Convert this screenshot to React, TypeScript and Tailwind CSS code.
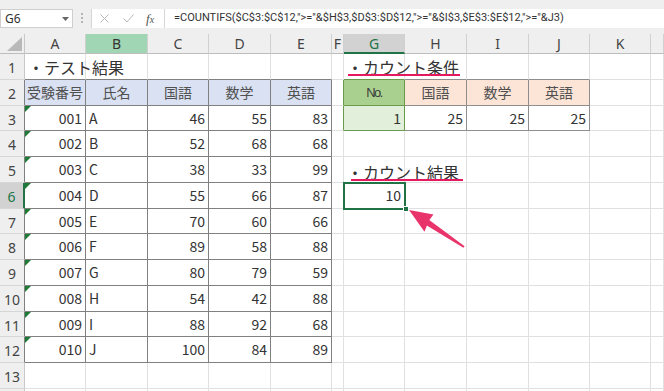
import React from 'react';

type Kind = 'light' | 'dark' | 'gray' | 'green';

const COLW = ['w-[61px]', 'w-[62px]', 'w-[61px]', 'w-[62px]', 'w-[61px]', 'w-[12px]', 'w-[61px]', 'w-[62px]', 'w-[62px]', 'w-[61px]', 'w-[61px]', 'w-[13px]'];
const COLN = ['A', 'B', 'C', 'D', 'E', 'F', 'G', 'H', 'I', 'J', 'K', ''];
const ROWH = ['h-[26px]', 'h-[26px]', 'h-[25px]', 'h-[26px]', 'h-[26px]', 'h-[26px]', 'h-[25px]', 'h-[26px]', 'h-[26px]', 'h-[26px]', 'h-[25px]', 'h-[26px]', 'h-[26px]', 'h-[26px]'];

const DATA = [
  ['001', 'A', '46', '55', '83'],
  ['002', 'B', '52', '68', '68'],
  ['003', 'C', '38', '33', '99'],
  ['004', 'D', '55', '66', '87'],
  ['005', 'E', '70', '60', '66'],
  ['006', 'F', '89', '58', '88'],
  ['007', 'G', '80', '79', '59'],
  ['008', 'H', '54', '42', '88'],
  ['009', 'I', '88', '92', '68'],
  ['010', 'J', '100', '84', '89'],
];

const BR: Record<Kind, string> = {
  light: 'border-r-[#e0e0e0]',
  dark: 'border-r-[#808080]',
  gray: 'border-r-[#8e8e8e]',
  green: 'border-r-[#6a9b4c]',
};
const BB: Record<Kind, string> = {
  light: 'border-b-[#e0e0e0]',
  dark: 'border-b-[#808080]',
  gray: 'border-b-[#8e8e8e]',
  green: 'border-b-[#6a9b4c]',
};

const inT1 = (r: number, c: number) => r >= 2 && r <= 12 && c >= 0 && c <= 4;
const inT2 = (r: number, c: number) => r >= 2 && r <= 3 && c >= 6 && c <= 9;

function rightKind(r: number, c: number): Kind {
  if (inT1(r, c) || inT1(r, c + 1)) return 'dark';
  if ((c === 5 || c === 6) && inT2(r, 6)) return 'green';
  if (inT2(r, c) || inT2(r, c + 1)) return 'gray';
  return 'light';
}
function bottomKind(r: number, c: number): Kind {
  if (inT1(r, c) || inT1(r + 1, c)) return 'dark';
  if (c === 6 && (inT2(r, c) || inT2(r + 1, c))) return 'green';
  if (inT2(r, c) || inT2(r + 1, c)) return 'gray';
  return 'light';
}

const HEAD1 = ['受験番号', '氏名', '国語', '数学', '英語'];
const HEAD2 = ['国語', '数学', '英語'];

function CellContent({ r, c }: { r: number; c: number }) {
  if (r === 1 && c === 0)
    return <span className="absolute left-[3px] top-[2px] z-10 whitespace-nowrap text-[16px] leading-[22px] text-[#333]">・テスト結果</span>;
  if (r === 1 && c === 6)
    return (
      <>
        <span className="absolute left-[3px] top-[2px] z-10 whitespace-nowrap text-[16px] leading-[22px] text-[#333]">・カウント条件</span>
        <span className="absolute left-[4px] top-[20px] z-10 h-[2px] w-[112px] bg-[#e5195e]" />
      </>
    );
  if (r === 5 && c === 6)
    return (
      <>
        <span className="absolute left-[3px] top-[4px] z-10 whitespace-nowrap text-[16px] leading-[22px] text-[#333]">・カウント結果</span>
        <span className="absolute left-[7px] top-[22px] z-10 h-[2px] w-[112px] bg-[#e5195e]" />
      </>
    );
  if (r === 2 && c <= 4) return <span className="w-full text-center text-[14px] text-[#505050]">{HEAD1[c]}</span>;
  if (r >= 3 && r <= 12 && c <= 4) {
    const v = DATA[r - 3][c];
    const left = c === 1;
    return (
      <>
        {c === 0 && <span className="absolute left-0 top-0 h-0 w-0 border-t-[6px] border-r-[6px] border-t-[#1f7a35] border-r-transparent" />}
        <span className={left ? 'w-full pl-[3px] text-left text-[14px] text-[#333]' : 'w-full pr-[3px] text-right text-[14px] text-[#333]'}>{v}</span>
      </>
    );
  }
  if (r === 2 && c === 6)
    return <span className="w-full text-center font-['Liberation_Sans_Narrow','Liberation_Sans',sans-serif] text-[13px] tracking-[-1.5px] text-[#3a3a3a]">No.</span>;
  if (r === 2 && c >= 7 && c <= 9) return <span className="w-full text-center text-[14px] text-[#505050]">{HEAD2[c - 7]}</span>;
  if (r === 3 && c === 6) return <span className="w-full pr-[3px] text-right text-[14px] text-[#333]">1</span>;
  if (r === 3 && c >= 7 && c <= 9) return <span className="w-full pr-[3px] text-right text-[14px] text-[#333]">25</span>;
  if (r === 6 && c === 6) return <span className="w-full pr-[3px] text-right text-[14px] text-[#333]">10</span>;
  return null;
}

function cellBg(r: number, c: number) {
  if (r === 2 && c <= 4) return 'bg-[#d9e1f2]';
  if (r === 2 && c === 6) return 'bg-[#a9d08e]';
  if (r === 3 && c === 6) return 'bg-[#e2efda]';
  if (r === 2 && c >= 7 && c <= 9) return 'bg-[#fce4d6]';
  return 'bg-white';
}

function Cell({ r, c }: { r: number; c: number }) {
  const cls = [
    'relative flex shrink-0 items-center overflow-visible border-r border-b',
    COLW[c],
    BR[rightKind(r, c)],
    BB[bottomKind(r, c)],
    cellBg(r, c),
  ].join(' ');
  return (
    <div className={cls}>
      <CellContent r={r} c={c} />
    </div>
  );
}

function RowHeader({ r }: { r: number }) {
  const sel = r === 6;
  const inTable = r >= 2 && r <= 12;
  const cls = [
    "flex w-[25px] shrink-0 items-center justify-center border-b border-b-[#d6d6d6] pt-[2px] text-[14px] font-['Noto_Sans',sans-serif]",
    sel ? 'border-r-2 border-r-[#217346] bg-[#d2d2d2] text-[#217346]' : 'border-r bg-[#efefef] text-[#444]',
    !sel && inTable ? 'border-r-[#808080]' : '',
    !sel && !inTable ? 'border-r-[#c8c8c8]' : '',
  ].join(' ');
  return <div className={cls}>{r <= 13 ? r : ''}</div>;
}

function FormulaBar() {
  return (
    <div className="flex h-[34px] w-full items-start bg-[#efefef] pt-[9px] font-['Noto_Sans',sans-serif]">
      <div className="flex h-[19px] w-[73px] shrink-0 items-center justify-between border border-[#cfcfcf] bg-white pl-[4px] pr-[3px] text-[12px] text-[#333]">
        <span>G6</span>
        <svg width="7" height="4" viewBox="0 0 7 4"><path d="M0 0 L7 0 L3.5 4 Z" fill="#666" /></svg>
      </div>
      <div className="flex w-[18px] shrink-0 flex-col items-center gap-[2px] pt-[4px]">
        <span className="h-[2px] w-[2px] bg-[#b5b5b5]" />
        <span className="h-[2px] w-[2px] bg-[#b5b5b5]" />
        <span className="h-[2px] w-[2px] bg-[#b5b5b5]" />
      </div>
      <div className="flex h-[19px] w-[73px] shrink-0 items-center border-l border-[#d6d6d6] bg-white">
        <svg className="ml-[8px]" width="9" height="9" viewBox="0 0 9 9"><path d="M0.5 0.5 L8.5 8.5 M8.5 0.5 L0.5 8.5" stroke="#b8b8b8" strokeWidth="1" /></svg>
        <svg className="ml-[14px]" width="11" height="9" viewBox="0 0 11 9"><path d="M0.5 4.5 L4 8 L10.5 0.5" stroke="#b8b8b8" strokeWidth="1" fill="none" /></svg>
        <span className="ml-[12px] font-['Liberation_Serif',serif] text-[13px] italic text-[#555]">f<span className="text-[10px]">x</span></span>
      </div>
      <div className="flex h-[19px] flex-1 items-center overflow-hidden whitespace-nowrap border-l border-[#d6d6d6] bg-white pl-[9px] font-['Roboto',sans-serif] text-[11px] text-[#333]">
        =COUNTIFS($C$3:$C$12,"&gt;="&amp;$H$3,$D$3:$D$12,"&gt;="&amp;$I$3,$E$3:$E$12,"&gt;="&amp;J3)
      </div>
    </div>
  );
}

function ColHeaderRow() {
  return (
    <div className="flex h-[20px] font-['Noto_Sans',sans-serif] text-[14px]">
      <div className="relative w-[25px] shrink-0 border-r border-b border-r-[#c8c8c8] border-b-[#bdbdbd] bg-[#efefef]">
        <svg className="absolute left-0 top-0" width="25" height="20" viewBox="0 0 25 20">
          <polygon points="7,17 22,17 22,3" fill="#b9b9b9" />
        </svg>
      </div>
      {COLN.map((n, c) => {
        const isB = c === 1;
        const isG = c === 6;
        const cls = [
          'flex shrink-0 items-center justify-center border-r',
          COLW[c],
          isB ? 'border-b border-r-[#d0d0d0] border-b-[#bdbdbd] bg-[#a0d6b4] text-[#333]' : '',
          isG ? 'border-b-2 border-r-[#d0d0d0] border-b-[#217346] bg-[#d2d2d2] text-[#217346]' : '',
          !isB && !isG ? 'border-b border-r-[#d0d0d0] border-b-[#bdbdbd] bg-[#efefef] text-[#444]' : '',
        ].join(' ');
        return <div key={c} className={cls}>{n}</div>;
      })}
    </div>
  );
}

export default function App() {
  const rows = Array.from({ length: 14 }, (_, i) => i + 1);
  return (
    <div className="relative h-[391px] w-[664px] overflow-hidden bg-white font-['Noto_Sans_CJK_JP','Noto_Sans',sans-serif]">
      <FormulaBar />
      <ColHeaderRow />
      {rows.map((r) => (
        <div key={r} className={`flex ${ROWH[r - 1]}`}>
          <RowHeader r={r} />
          {COLW.map((_, c) => (
            <Cell key={c} r={r} c={c} />
          ))}
        </div>
      ))}
      <div className="pointer-events-none absolute left-[343px] top-[182px] z-20 h-[28px] w-[63px] border-2 border-[#217346]" />
      <div className="pointer-events-none absolute left-[403px] top-[206px] z-20 h-[6px] w-[6px] border border-white bg-[#217346]" />
      <svg className="pointer-events-none absolute left-0 top-0 z-20" width="664" height="391" viewBox="0 0 664 391">
        <polygon points="464.6,246.2 463.4,247.8 425.6,224.8 428.9,219.8" fill="#e8336b" />
        <polygon points="409,210 433.4,214.4 428.6,221 424.5,231.8" fill="#e8336b" />
      </svg>
    </div>
  );
}
